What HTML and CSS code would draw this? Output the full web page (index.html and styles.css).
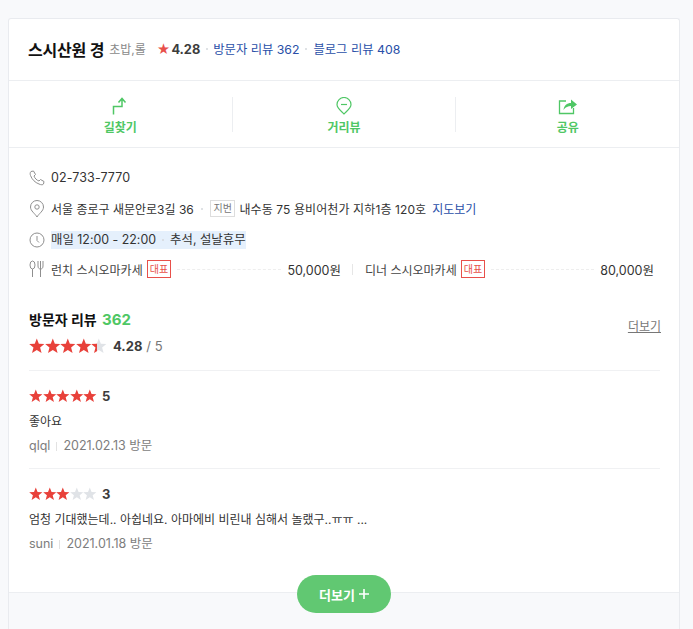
FILE: index.html
```html
<!DOCTYPE html>
<html lang="ko">
<head>
<meta charset="utf-8">
<title>스시산원 경</title>
<link rel="stylesheet" href="styles.css">
</head>
<body>
<svg class="defs" width="0" height="0" aria-hidden="true">
  <defs>
    <symbol id="star" viewBox="0 0 16 16"><path d="M8 .6L10.1 5.9L15.8 6.2L11.4 9.8L12.9 15.3L8 12.2L3.1 15.3L4.6 9.8L.2 6.2L5.9 5.9Z"/></symbol>
    <linearGradient id="part"><stop offset="38%" stop-color="#e8413a"/><stop offset="38%" stop-color="#e0e3e7"/></linearGradient>
  </defs>
</svg>
<main class="card">
  <header class="head">
    <h1 class="name">스시산원 경</h1>
    <span class="cat">초밥,롤</span>
    <span class="score"><span class="red">★</span>4.28</span>
    <i class="dot score-dot"></i>
    <a class="link">방문자 리뷰 362</a>
    <i class="dot link-dot"></i>
    <a class="link">블로그 리뷰 408</a>
  </header>
  <nav class="actions">
    <div class="action">
      <svg class="aicon" width="16" height="18" viewBox="0 0 16 18"><path d="M1.5 17.5V9.5H10V2M6.5 5.5L10 1.5L13.5 5.5" fill="none" stroke="#4fc765" stroke-width="1.5"/></svg>
      <span>길찾기</span>
    </div>
    <div class="action">
      <svg class="aicon" width="16" height="18" viewBox="0 0 16 18"><path d="M8 17C6 14.5 1 11.5 1 7.5A7 7 0 0 1 15 7.5C15 11.5 10 14.5 8 17Z" fill="none" stroke="#4fc765" stroke-width="1.2"/><path d="M5 7.5H11" stroke="#4fc765" stroke-width="1.2"/></svg>
      <span>거리뷰</span>
    </div>
    <div class="action">
      <svg class="aicon" width="20" height="18" viewBox="0 0 20 18"><path d="M8 4H1.5V16.5H15.5V11" fill="none" stroke="#4fc765" stroke-width="1.3"/><path d="M5.5 13C6 8.5 9 6 13 6V2.5L19 7.5L13 12V9C10 9 7.5 10 5.5 13Z" fill="#4fc765"/></svg>
      <span>공유</span>
    </div>
  </nav>
  <section class="info">
    <div class="row">
      <svg class="ricon" width="16" height="16" viewBox="0 0 16 16"><path d="M2 1.5L4.5 1L6.5 4.5L5 6C5.5 8 8 10.5 10 11L11.5 9.5L15 11.5L14.5 14C14 15 12 15 10 14C6 12.5 3 9.5 1.5 5.5C1 4 1 2.5 2 1.5Z" fill="none" stroke="#8f8f8f" stroke-width="1"/></svg>
      <span class="phone">02-733-7770</span>
    </div>
    <div class="row">
      <svg class="ricon" width="16" height="18" viewBox="0 0 16 18"><path d="M8 17C6 13.5 1.5 11 1.5 7A6.5 6.5 0 0 1 14.5 7C14.5 11 10 13.5 8 17Z" fill="none" stroke="#8f8f8f"/><circle cx="8" cy="7" r="2.2" fill="none" stroke="#8f8f8f"/></svg>
      <span class="road">서울 종로구 새문안로3길 36</span>
      <i class="dot addr-dot"></i>
      <span class="lot">지번</span>
      <span class="jibun">내수동 75 용비어천가 지하1층 120호</span>
      <a class="link map">지도보기</a>
    </div>
    <div class="row">
      <svg class="ricon" width="16" height="16" viewBox="0 0 16 16"><circle cx="8" cy="8" r="7" fill="none" stroke="#8f8f8f"/><path d="M8 4V8.5L10 10.5" fill="none" stroke="#8f8f8f"/></svg>
      <span class="hours">매일 12:00 - 22:00<i class="dot hours-dot"></i>추석, 설날휴무</span>
    </div>
    <div class="row menu-row">
      <svg class="ricon" width="16" height="18" viewBox="0 0 16 18"><ellipse cx="3.5" cy="5" rx="2.5" ry="4" fill="none" stroke="#8f8f8f"/><path d="M3.5 9V17M9 1V6C9 8 10 9 11.5 9C13 9 14 8 14 6V1M11.5 1V17" fill="none" stroke="#8f8f8f"/></svg>
      <div class="menu first">
        <span>런치 스시오마카세</span><b class="tag">대표</b><i class="leader"></i><span class="price">50,000원</span>
      </div>
      <i class="vbar"></i>
      <div class="menu second">
        <span>디너 스시오마카세</span><b class="tag">대표</b><i class="leader"></i><span class="price">80,000원</span>
      </div>
    </div>
  </section>
  <section class="reviews">
    <div class="rev-top">
      <div>
        <h2 class="rev-title">방문자 리뷰 <em>362</em></h2>
        <div class="avg">
          <span class="stars big">
            <svg class="on"><use href="#star"/></svg><svg class="on"><use href="#star"/></svg><svg class="on"><use href="#star"/></svg><svg class="on"><use href="#star"/></svg><svg class="part"><use href="#star"/></svg>
          </span>
          <b>4.28</b><span class="of">/ 5</span>
        </div>
      </div>
      <a class="more-link">더보기</a>
    </div>
    <article class="review">
      <div class="rate"><span class="stars">
        <svg class="on"><use href="#star"/></svg><svg class="on"><use href="#star"/></svg><svg class="on"><use href="#star"/></svg><svg class="on"><use href="#star"/></svg><svg class="on"><use href="#star"/></svg>
      </span><b>5</b></div>
      <p class="text">좋아요</p>
      <p class="meta">qlql<i class="sep"></i>2021.02.13 방문</p>
    </article>
    <article class="review">
      <div class="rate"><span class="stars">
        <svg class="on"><use href="#star"/></svg><svg class="on"><use href="#star"/></svg><svg class="on"><use href="#star"/></svg><svg class="off"><use href="#star"/></svg><svg class="off"><use href="#star"/></svg>
      </span><b>3</b></div>
      <p class="text">엄청 기대했는데.. 아쉽네요. 아마에비 비린내 심해서 놀랬구..ㅠㅠ ...</p>
      <p class="meta">suni<i class="sep"></i>2021.01.18 방문</p>
    </article>
  </section>
  <footer class="foot">
    <button class="more-btn">더보기 <svg width="10" height="10" viewBox="0 0 10 10"><path d="M5 0V10M0 5H10" stroke="#fff" stroke-width="1.6"/></svg></button>
  </footer>
</main>
</body>
</html>
```
FILE: styles.css
```css
* { box-sizing: border-box; }
html, body { height: 100%; }
body {
  margin: 0;
  height: 629px;
  overflow: hidden;
  padding: 18px 13px 0 8px;
  background: #f8f9fb;
  font-family: Inter, "Noto Sans CJK KR", sans-serif;
  font-size: 13px;
  color: #333;
}
i { font-style: normal; }
a { text-decoration: none; }
.defs { position: absolute; }
.card {
  background: #fff;
  border: 1px solid #e9ebef;
  border-bottom: 0;
  border-radius: 3px 3px 0 0;
  height: 611px;
  display: flex;
  flex-direction: column;
}
.head {
  height: 62px;
  flex: none;
  display: flex;
  align-items: center;
  padding: 0 20px 2px 19px;
  border-bottom: 1px solid #eceef1;
}
.name { margin: 0; font-size: 16px; font-weight: 700; color: #111; letter-spacing: -0.2px; }
.cat { margin-left: 5px; color: #8a8a8a; font-size: 12px; }
.score { margin-left: 11px; font-weight: 700; color: #3c3c3c; font-size: 12.8px; }
.red { color: #e8504a; font-size: 13px; margin-right: 1px; }
.dot { width: 2px; height: 2px; border-radius: 50%; background: #d5d8dc; margin: 0 6px; flex: none; }
.score-dot { margin: 0 5px 0 6px; }
.link-dot { margin: 0 6px; }
.link { color: #2a4fa8; font-size: 12.3px; }
.actions {
  height: 67px;
  flex: none;
  display: flex;
  align-items: center;
  border-bottom: 1px solid #eceef1;
}
.action {
  flex: 1;
  height: 35px;
  display: flex;
  flex-direction: column;
  align-items: center;
  gap: 6px;
  color: #4fc765;
  font-weight: 700;
  font-size: 12px;
  line-height: 14px;
  border-left: 1px solid #eceef1;
}
.action:first-child { border-left: 0; }
.action span { flex: none; }
.aicon { flex: none; }
.info { flex: none; padding: 14px 20px 0 20px; }
.row {
  height: 31px;
  display: flex;
  align-items: center;
  font-size: 12px;
  color: #333;
}
.ricon { flex: none; width: 16px; margin-right: 6px; }
.phone { font-size: 12.5px; letter-spacing: .1px; }
.road { width: 143px; white-space: nowrap; }
.addr-dot { margin: 0 7px; }
.lot {
  border: 1px solid #ddd;
  color: #777;
  font-size: 10px;
  height: 17px;
  line-height: 15px;
  padding: 0 2.5px;
  margin-right: 4px;
}
.jibun { letter-spacing: .1px; }
.map { margin-left: 6px; font-size: 12px; }
.hours { background: #e5f0fc; height: 18px; line-height: 18px; display: flex; align-items: center; font-size: 12.4px; }
.hours-dot { margin: 0 6px; }
.menu-row { color: #444; height: 30px; margin-top: -1px; margin-bottom: 1px; }
.menu { display: flex; align-items: center; }
.first { width: 290px; }
.second { flex: 1; padding-right: 5px; }
.vbar { width: 1px; height: 11px; background: #e6e6e6; margin: 0 12px 0 11px; flex: none; }
.tag {
  border: 1px solid #e8504a;
  color: #e8504a;
  font-size: 10px;
  font-weight: 400;
  height: 18px;
  line-height: 16px;
  padding: 0 2px;
  margin-left: 4px;
}
.leader { flex: 1; border-top: 1px dashed #eee; margin: 0 6px; }
.price { color: #333; font-size: 12.5px; }
.reviews { flex: 1; padding: 0 19px 0 20px; min-height: 0; }
.rev-top {
  display: flex;
  justify-content: space-between;
  align-items: flex-start;
  margin-top: 26px;
  height: 60px;
  border-bottom: 1px solid #f0f1f3;
}
.rev-title { margin: 0; font-size: 14px; font-weight: 700; color: #111; line-height: 18px; }
.rev-title em { font-style: normal; color: #4fc765; font-size: 15px; margin-left: 2px; }
.more-link { color: #777; font-size: 12px; text-decoration: underline; margin-top: 6px; margin-right: -1px; }
.avg { display: flex; align-items: center; margin-top: 7px; height: 20px; font-size: 13px; }
.avg b { color: #3c3c3c; margin-left: 6px; }
.of { color: #777; margin-left: 4px; }
.stars { display: flex; line-height: 1; }
.stars svg { display: block; width: 13.6px; height: 13.6px; flex: none; }
.stars.big { width: 78px; }
.stars.big svg { width: 15.6px; height: 15.6px; }
.stars .on { fill: #e8413a; }
.stars .off { fill: #e0e3e7; }
.stars .part { fill: url(#part); }
.review { height: 98px; padding-top: 17px; border-bottom: 1px solid #f0f1f3; }
.review:last-child { border-bottom: 0; }
.rate { display: flex; align-items: center; height: 16px; font-size: 14px; }
.rate b { font-size: 13px; color: #3c3c3c; margin-left: 5px; }
.text { margin: 9px 0 0; font-size: 12px; line-height: 18px; color: #333; }
.meta { margin: 7px 0 0; font-size: 12.5px; line-height: 16px; color: #7d7d7d; display: flex; align-items: center; }
.sep { width: 1px; height: 9px; background: #e2e2e2; margin: 0 6px; }
.foot {
  height: 37px;
  flex: none;
  background: #f8f9fb;
  border-top: 1px solid #eceef1;
  display: flex;
  justify-content: center;
  position: relative;
}
.more-btn {
  position: absolute;
  left: 288px;
  top: -18px;
  width: 94px;
  height: 38px;
  border: 0;
  border-radius: 19px;
  background: #61c872;
  color: #fff;
  font: 700 13px Inter, "Noto Sans CJK KR", sans-serif;
  display: flex;
  align-items: center;
  justify-content: center;
  gap: 4px;
}
```
